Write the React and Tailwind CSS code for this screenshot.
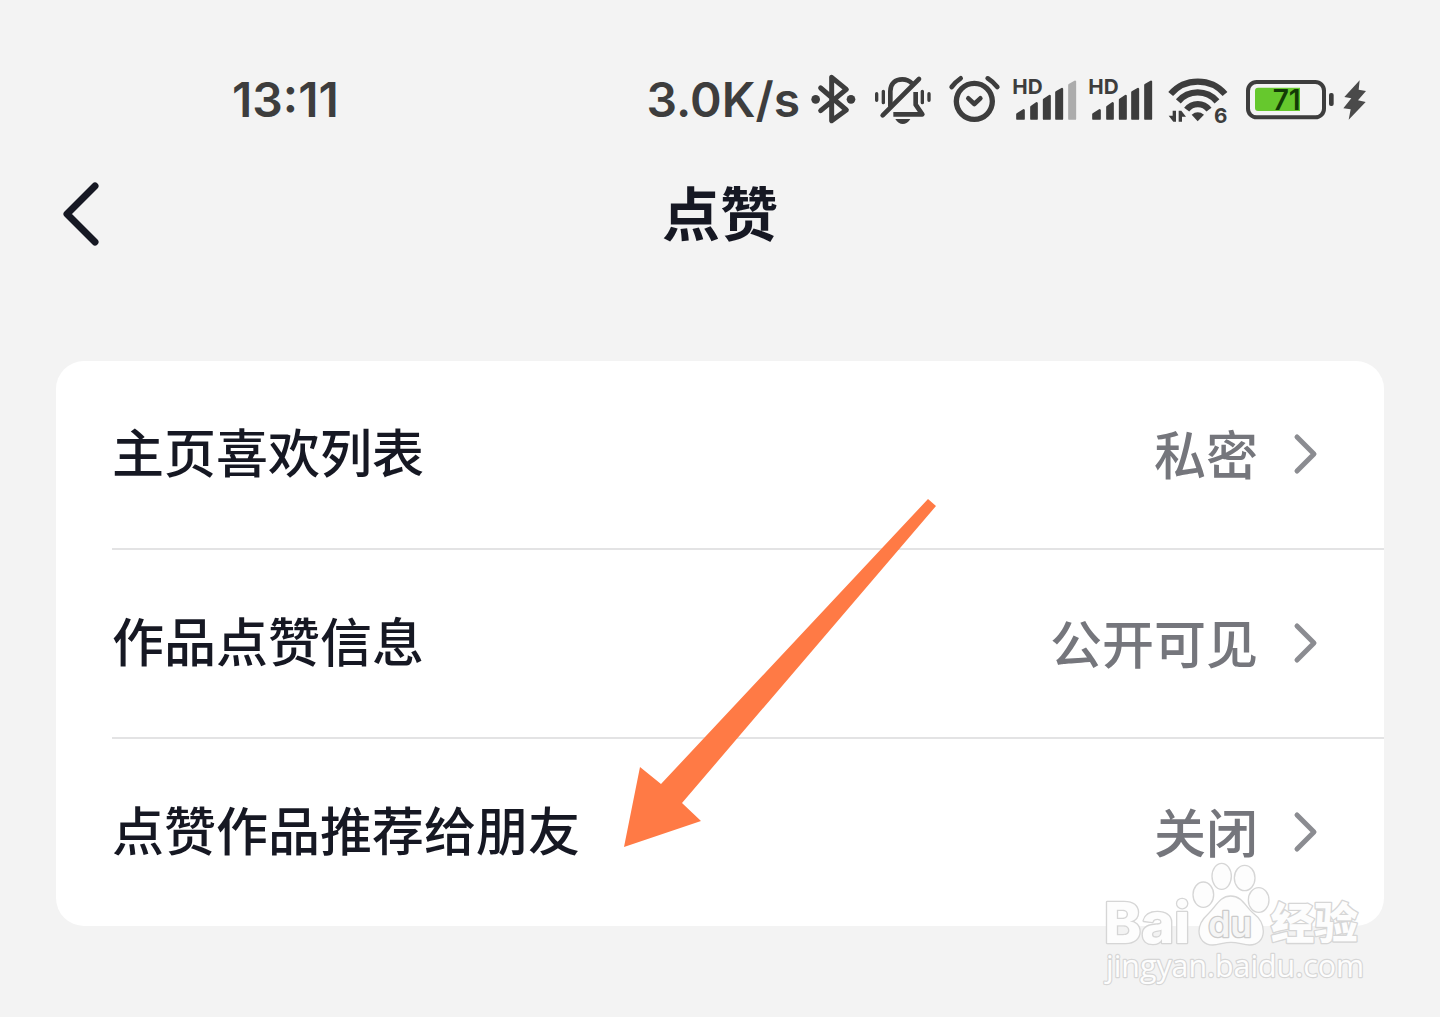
import React from "react";

/**
 * Likes settings screen
 * - StatusBar: phone status row (time, network speed, system icons)
 * - TitleBar: back button + page title
 * - SettingRow: one label / value entry of the card
 */

const SETTINGS = [
  { id: "favorites", label: "主页喜欢列表", value: "私密" },
  { id: "like-info", label: "作品点赞信息", value: "公开可见" },
  { id: "recommend", label: "点赞作品推荐给朋友", value: "关闭" }
];

// Signal bars, shortest first; each top edge slopes up to the right
const SIGNAL_BARS = [
  "M16 121L35 109V134H16z",
  "M58 99L74 88V134H58z",
  "M96 77L113 66V134H96z",
  "M133 55L150 45V134H133z",
  "M172 33L189 23V134H172z"
];

function BluetoothIcon() {
  return (
    <svg viewBox="0 0 168 156" className="h-[52px] w-14" fill="none" stroke="currentColor" strokeWidth={15} strokeLinecap="round" strokeLinejoin="round" aria-hidden="true">
      <path d="M38 42L115 108L71 140V10L115 46L38 110" />
      <circle cx="23" cy="76" r="13" fill="currentColor" stroke="none" />
      <circle cx="129" cy="76" r="13" fill="currentColor" stroke="none" />
    </svg>
  );
}

function MutedBellIcon() {
  return (
    <svg viewBox="0 0 192 156" className="h-[52px] w-16" fill="none" stroke="currentColor" strokeWidth={14} strokeLinecap="round" strokeLinejoin="round" aria-hidden="true">
      <path d="M32 124L141 15" />
      <path strokeLinecap="butt" d="M55 98V52C55 28 70 16 91 16C103 16 112 20 120 28" />
      <path strokeLinecap="butt" d="M131 54V92L151 121H64" />
      <path fill="currentColor" stroke="none" d="M70 135H115C109 145 101 150 92 150C84 150 76 145 70 135z" />
      <path strokeWidth={10} d="M14 59V79M34 52V86M151 52V86M171 59V79" />
    </svg>
  );
}

function AlarmIcon() {
  return (
    <svg viewBox="0 0 180 156" className="h-[52px] w-15" fill="none" stroke="currentColor" strokeWidth={14} strokeLinecap="round" strokeLinejoin="round" aria-hidden="true">
      <circle cx="91" cy="82" r="54" strokeWidth={16} />
      <path d="M73 73L91 90L109 73" />
      <path d="M23 39Q34 24 50 13M131 13Q148 24 160 39" />
    </svg>
  );
}

function SignalIcon({ level = 5 }) {
  return (
    <svg viewBox="0 0 204 156" className="h-[52px] w-[68px]" fill="currentColor" aria-hidden="true">
      <text x="1" y="61" fontSize="62" fontWeight="700">HD</text>
      {SIGNAL_BARS.map((d, idx) => (
        <path key={d} d={d} stroke="currentColor" strokeWidth={7} strokeLinejoin="round" className={idx < level ? "" : "text-[#acacac]"} />
      ))}
    </svg>
  );
}

function WifiIcon() {
  return (
    <svg viewBox="0 0 216 156" className="h-[52px] w-[72px] overflow-visible" fill="none" stroke="currentColor" strokeWidth={19} aria-hidden="true">
      <path d="M20 60A108 108 0 0 1 183 60" />
      <path d="M43 82A76 76 0 0 1 159 82" />
      <path d="M68 107A42 42 0 0 1 135 107" />
      <path fill="currentColor" stroke="none" d="M83 122Q101 108 120 122L101 142z" />
      <path fill="currentColor" stroke="none" d="M26 110H36V143H28L14 125H26zM44 143V110H52L66 128H54V143z" />
      <text x="150" y="146" fontSize="62" fontWeight="700" fill="currentColor" stroke="none">6</text>
    </svg>
  );
}

function BatteryIcon() {
  return (
    <svg viewBox="0 0 270 156" className="h-[52px] w-[90px]" fill="none" aria-hidden="true">
      <rect x="12" y="24" width="228" height="106" rx="26" stroke="currentColor" strokeWidth={12} />
      <path fill="#66c82d" d="M42 41H168V111H42Q33 111 33 102V50Q33 41 42 41z" />
      <rect x="255" y="57" width="14" height="39" rx="6" fill="currentColor" />
      <text x="86" y="109" fontSize="84" fontWeight="600" fill="#123b06">71</text>
    </svg>
  );
}

function BoltIcon() {
  return (
    <svg viewBox="0 0 78 156" className="h-[52px] w-[26px]" fill="#4a4a4a" aria-hidden="true">
      <path d="M53 19L7 69L28 73L4 103L26 106L20 137L71 84L48 79L72 51L50 47z" />
    </svg>
  );
}

function StatusBar() {
  return (
    <div className="flex items-center justify-between pr-[72px] pl-[232px] font-['Inter',sans-serif] text-[#3d3d3d]">
      <span className="text-[48px] leading-[52px] font-semibold">13:11</span>
      <div className="flex items-center gap-2">
        <span className="text-[48px] leading-[52px] font-semibold">3.0K/s</span>
        <BluetoothIcon />
        <MutedBellIcon />
        <AlarmIcon />
        <SignalIcon level={4} />
        <SignalIcon />
        <WifiIcon />
        <BatteryIcon />
        <BoltIcon />
      </div>
    </div>
  );
}

function TitleBar() {
  return (
    <header className="mt-11 grid h-[88px] grid-cols-[1fr_auto_1fr] items-center px-14">
      <button type="button" aria-label="返回" className="w-12">
        <svg viewBox="0 0 48 72" className="h-[72px] w-12" fill="none" stroke="currentColor" strokeWidth={7} strokeLinecap="round" strokeLinejoin="round" aria-hidden="true">
          <path d="M39 8L11 36L39 64" />
        </svg>
      </button>
      <h1 className="pb-1.5 text-[58px] leading-[80px] font-bold">点赞</h1>
    </header>
  );
}

function SettingRow({ label, value }) {
  return (
    <li className="ml-14 border-t-2 border-[#e3e3e4] first:border-t-0">
      <button type="button" className="flex h-[187px] w-full items-center pr-[66px] pb-0.5 text-left text-[52px]">
        <span className="flex-1 pb-1.5 font-medium">{label}</span>
        <span className="pb-0.5 font-medium text-[#75767c]">{value}</span>
        <svg viewBox="0 0 28 48" className="ml-8 h-12 w-7 text-[#8b8c91]" fill="none" stroke="currentColor" strokeWidth={5} strokeLinecap="round" strokeLinejoin="round" aria-hidden="true">
          <path d="M7 7L24 24L7 41" />
        </svg>
      </button>
    </li>
  );
}

function PointerArrow() {
  return (
    <svg viewBox="0 0 312 349" className="pointer-events-none absolute top-[137px] left-1/2 -ml-24 h-[349px] w-[312px]" fill="#ff7a45" aria-hidden="true">
      <path d="M304 1L312 8L58 305L77 323L0 349L16 269L37 286z" />
    </svg>
  );
}

function Watermark() {
  return (
    <svg viewBox="0 0 810 408" className="pointer-events-none absolute right-3.5 -bottom-[66px] h-[136px] w-[270px]" fill="#fdfdfd" stroke="#d6d6d6" strokeWidth={5} strokeLinejoin="round" role="img" aria-label="Baidu 经验">
      <g strokeWidth={4}>
        <ellipse cx="365" cy="61" rx="29" ry="39" />
        <ellipse cx="434" cy="66" rx="31" ry="38" />
        <ellipse cx="310" cy="116" rx="31" ry="38" />
        <ellipse cx="476" cy="132" rx="31" ry="37" />
        <path d="M392 120C427 120 436 152 460 172C480 187 490 205 490 226C490 253 471 267 449 267C430 267 414 259 393 259C372 259 357 267 338 267C314 267 297 250 297 226C297 205 308 188 325 173C348 152 359 120 392 120z" />
      </g>
      <g className="font-['Inter',sans-serif] [paint-order:stroke]" strokeWidth={8}>
        <text x="12" y="260" fontSize="168" fontWeight="800">Bai</text>
        <text x="325" y="242" fontSize="106" fontWeight="600" fill="#f5f5f5" stroke="#cbcbcb">du</text>
      </g>
      <text x="512" y="248" fontSize="131" fontWeight="900" strokeWidth={8} className="[paint-order:stroke]">经验</text>
      <text x="18" y="362" fontSize="91" strokeWidth={7} className="font-['Open_Sans',sans-serif] [paint-order:stroke]">jingyan.baidu.com</text>
    </svg>
  );
}

function App() {
  return (
    <div className="min-h-screen bg-[#f3f3f3] pt-[74px] pb-[91px] font-['Noto_Sans_CJK_SC',sans-serif] text-[#161823]">
      <StatusBar />
      <TitleBar />
      <main className="relative mx-14 mt-[103px]">
        <ul className="rounded-[28px] bg-white">
          {SETTINGS.map((item) => (
            <SettingRow key={item.id} label={item.label} value={item.value} />
          ))}
        </ul>
        <PointerArrow />
        <Watermark />
      </main>
    </div>
  );
}

export default App;
